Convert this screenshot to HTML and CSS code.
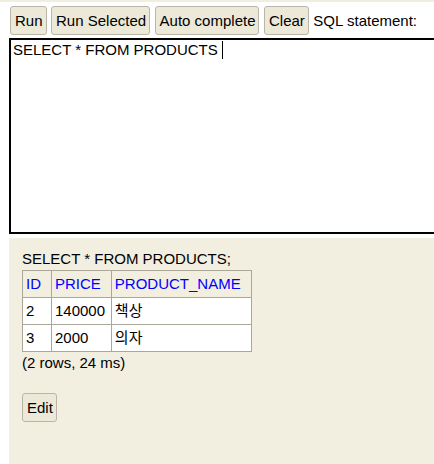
FILE: index.html
```html
<!DOCTYPE html>
<html>
<head>
<meta charset="utf-8">
<link rel="stylesheet" href="styles.css">
</head>
<body>
<div class="query">
  <div class="toolbar">
    <button class="btn">Run</button>
    <button class="btn">Run Selected</button>
    <button class="btn">Auto complete</button>
    <button class="btn">Clear</button>
    <span class="label">SQL statement:</span>
  </div>
  <div class="editor">SELECT * FROM PRODUCTS <span class="caret"></span></div>
</div>
<div class="result">
  <div class="stmt">SELECT * FROM PRODUCTS;</div>
  <table class="grid">
    <tr><th>ID</th><th>PRICE</th><th>PRODUCT_NAME</th></tr>
    <tr><td>2</td><td>140000</td><td>책상</td></tr>
    <tr><td>3</td><td>2000</td><td>의자</td></tr>
  </table>
  <div class="info">(2 rows, 24 ms)</div>
  <button class="btn edit">Edit</button>
</div>
</body>
</html>
```
FILE: styles.css
```css
html, body {
  margin: 0;
  padding: 0;
  background: #ffffff;
  overflow: hidden;
}
body {
  font-family: "Liberation Sans", Arial, "Noto Sans CJK KR", sans-serif;
  font-size: 15px;
  color: #000;
  width: 434px;
  height: 464px;
}
.query {
  border-top: 2px solid #f1eee0;
  padding-top: 4px;
}
.toolbar {
  display: flex;
  align-items: center;
  gap: 4.5px;
  padding-left: 10px;
  height: 29px;
}
.btn {
  font-family: "Liberation Sans", Arial, sans-serif;
  font-size: 15px;
  color: #000;
  background: #ece9d8;
  border: 1px solid #b9b6a8;
  border-radius: 3px;
  height: 29px;
  padding: 0 3px 0 4px;
  margin: 0;
  line-height: 27px;
}
.label {
  white-space: nowrap;
}
.editor {
  margin: 3px 0 0 9px;
  width: 419px;
  height: 190px;
  border: 2px solid #000;
  border-right: none;
  padding: 1px 2px;
  line-height: 18px;
  white-space: pre;
  overflow: hidden;
}
.caret {
  display: inline-block;
  width: 1px;
  height: 18px;
  background: #000;
  vertical-align: top;
}
.result {
  margin: 4px 0 0 9px;
  background: #f2eee0;
  height: 228px;
  padding: 12px 13px 0;
  box-sizing: border-box;
}
.stmt {
  line-height: 17px;
  margin-bottom: 3px;
}
.grid {
  border-collapse: collapse;
  border: 1px solid #aaa698;
}
.grid th, .grid td {
  border: 1px solid #aaa698;
  font-weight: normal;
  text-align: left;
  line-height: 18px;
  height: 27px;
  box-sizing: border-box;
  padding: 0 2px 0 3px;
}
.grid th {
  color: #0000ff;
  padding-right: 10px;
  background: #f2eee0;
}
.grid td {
  background: #ffffff;
}
.info {
  line-height: 17px;
  margin-top: 2px;
}
.edit {
  margin-top: 22px;
  display: block;
}
```
